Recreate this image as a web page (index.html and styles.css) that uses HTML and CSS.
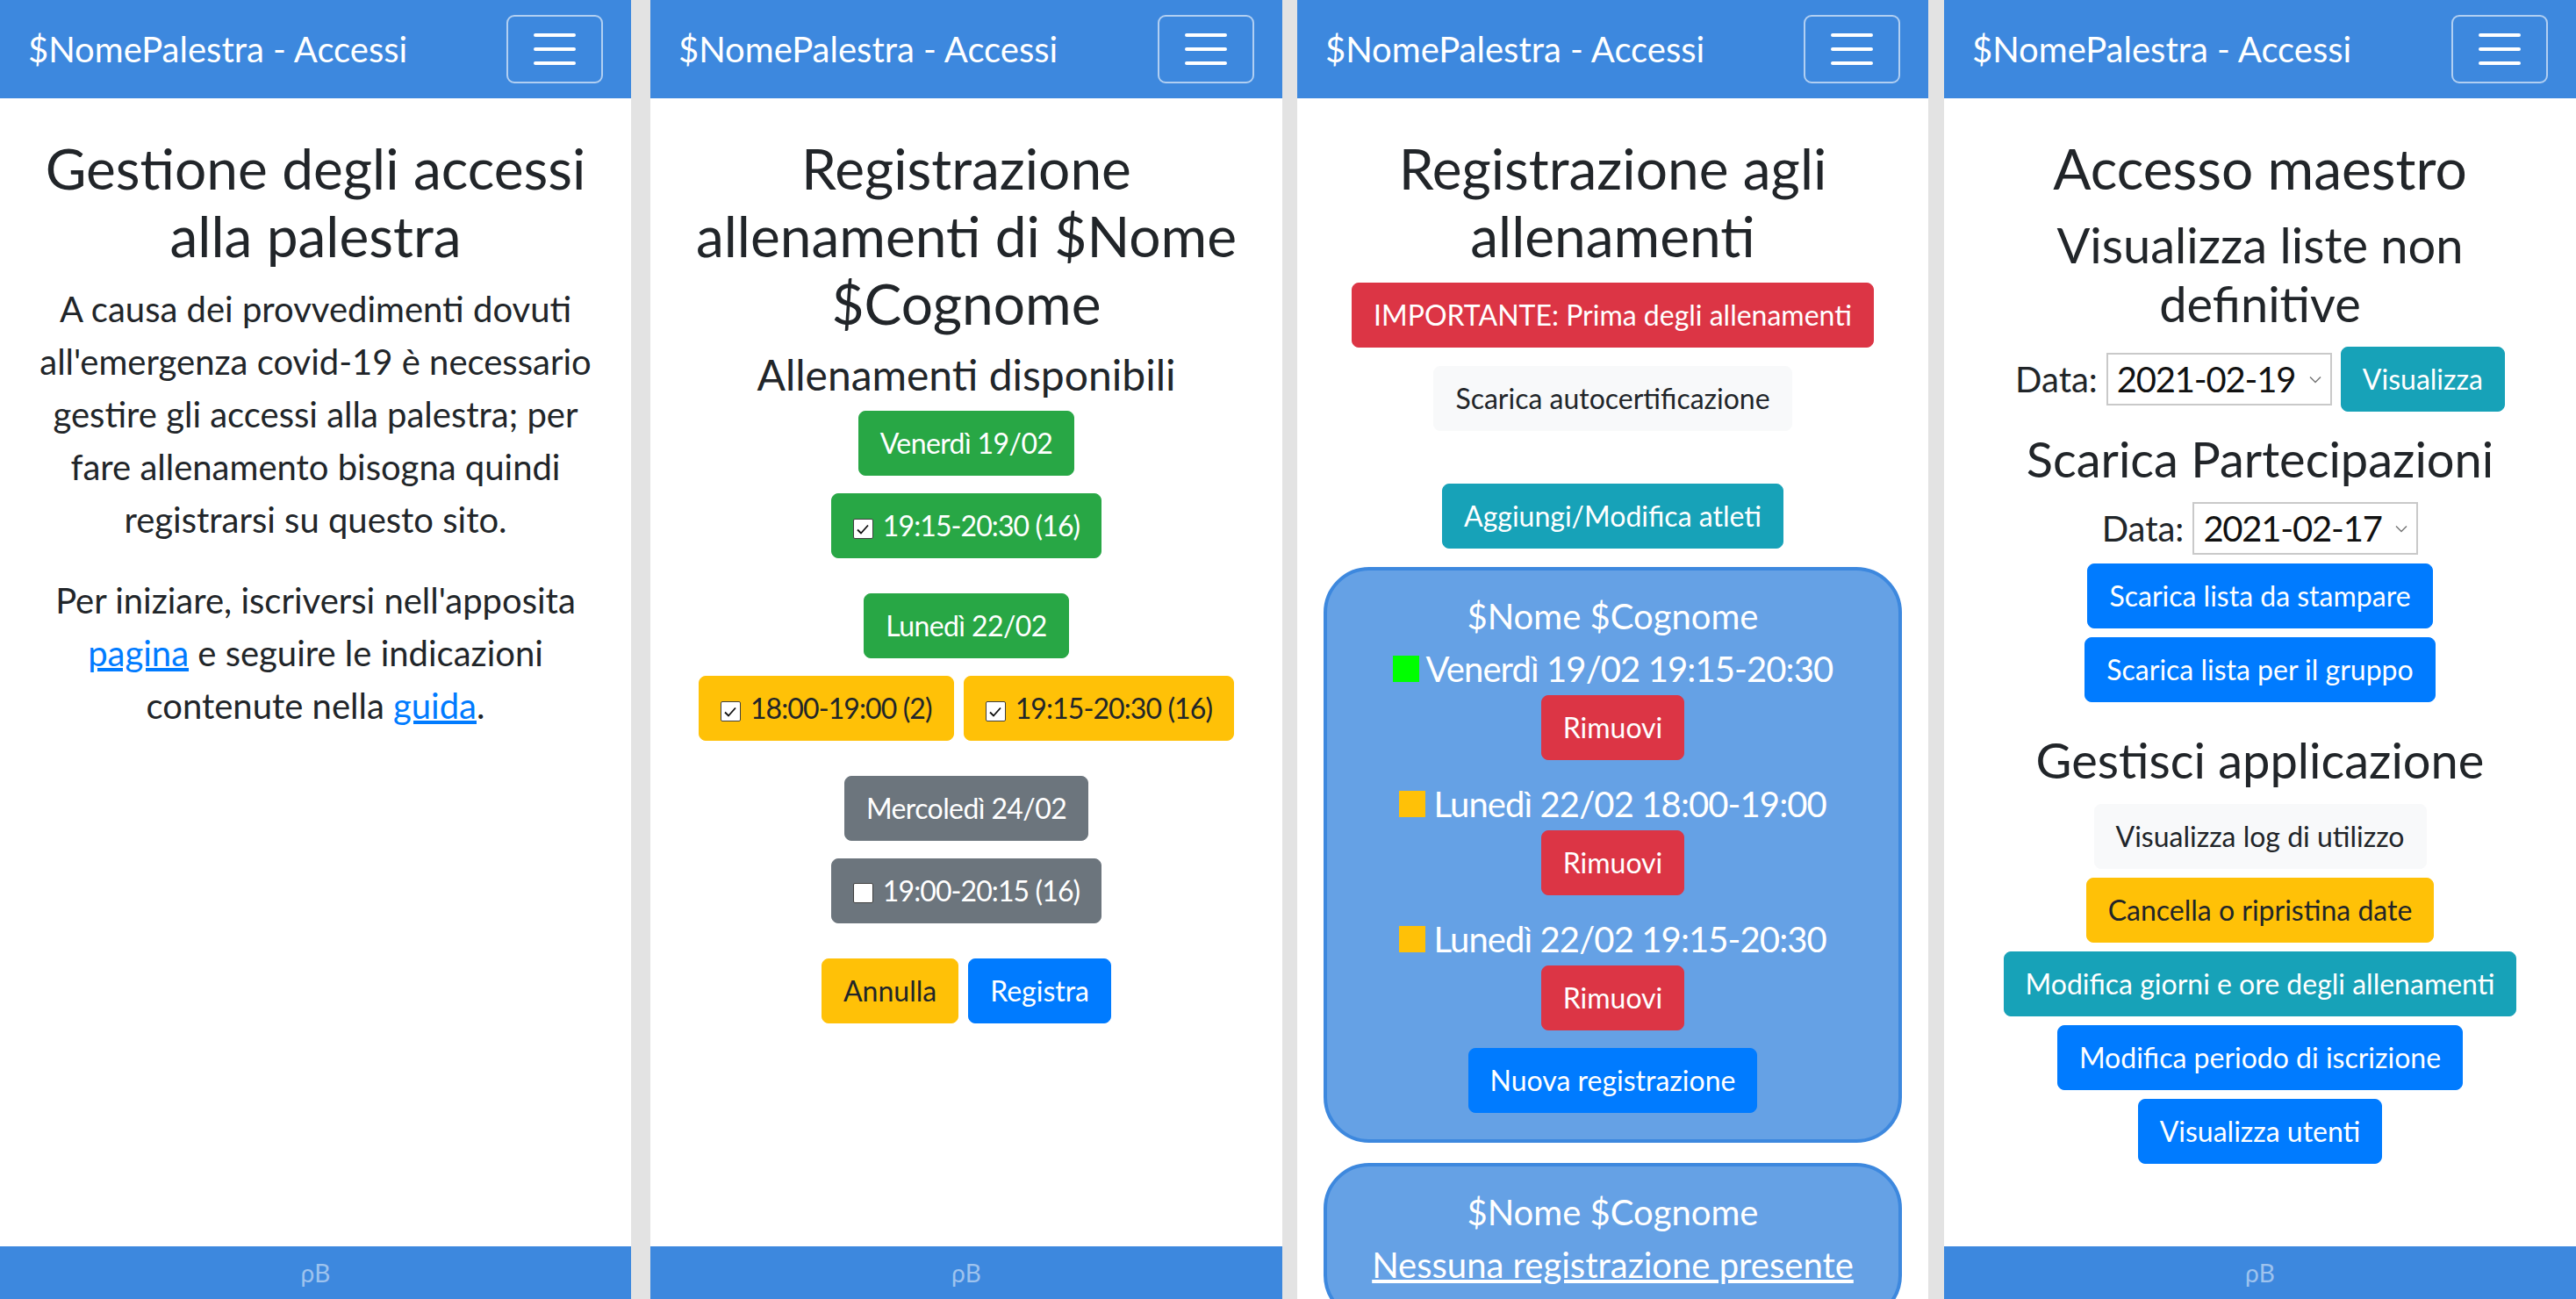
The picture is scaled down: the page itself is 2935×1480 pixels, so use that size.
FILE: index.html
```html
<!DOCTYPE html>
<html lang="it">
<head>
<meta charset="utf-8">
<title>$NomePalestra - Accessi</title>
<link rel="stylesheet" href="styles.css">
</head>
<body>
<div class="screens">

  <section class="screen screen--home">
    <header class="navbar">
      <span class="brand">$NomePalestra - Accessi</span>
      <button class="toggler" aria-label="Menu"><svg width="60" height="60" viewBox="0 0 60 60"><path d="M8 14h44M8 30h44M8 46h44" stroke="#fff" stroke-width="4" stroke-linecap="round" fill="none"/></svg></button>
    </header>
    <main class="content">
      <h1 class="title">Gestione degli accessi<br>alla palestra</h1>
      <p class="lead">A causa dei provvedimenti dovuti<br>all'emergenza covid-19 è necessario<br>gestire gli accessi alla palestra; per<br>fare allenamento bisogna quindi<br>registrarsi su questo sito.</p>
      <p class="lead">Per iniziare, iscriversi nell'apposita<br><a class="link" href="#">pagina</a> e seguire le indicazioni<br>contenute nella <a class="link" href="#">guida</a>.</p>
    </main>
    <footer class="footer">ρB</footer>
  </section>

  <section class="screen screen--register">
    <header class="navbar">
      <span class="brand">$NomePalestra - Accessi</span>
      <button class="toggler" aria-label="Menu"><svg width="60" height="60" viewBox="0 0 60 60"><path d="M8 14h44M8 30h44M8 46h44" stroke="#fff" stroke-width="4" stroke-linecap="round" fill="none"/></svg></button>
    </header>
    <main class="content">
      <h1 class="title">Registrazione<br>allenamenti di $Nome<br>$Cognome</h1>
      <h4 class="section-title">Allenamenti disponibili</h4>
      <div class="day">
        <span class="btn btn--success">Venerdì 19/02</span>
        <div class="slots">
          <label class="btn btn--success"><span class="check"><svg width="20" height="20" viewBox="0 0 20 20"><path d="M4 10.5l4 4 8-9" stroke="#111" stroke-width="1.8" fill="none"/></svg></span>19:15-20:30 (16)</label>
        </div>
      </div>
      <div class="day">
        <span class="btn btn--success">Lunedì 22/02</span>
        <div class="slots">
          <label class="btn btn--warning"><span class="check"><svg width="20" height="20" viewBox="0 0 20 20"><path d="M4 10.5l4 4 8-9" stroke="#111" stroke-width="1.8" fill="none"/></svg></span>18:00-19:00 (2)</label>
          <label class="btn btn--warning"><span class="check"><svg width="20" height="20" viewBox="0 0 20 20"><path d="M4 10.5l4 4 8-9" stroke="#111" stroke-width="1.8" fill="none"/></svg></span>19:15-20:30 (16)</label>
        </div>
      </div>
      <div class="day">
        <span class="btn btn--secondary">Mercoledì 24/02</span>
        <div class="slots">
          <label class="btn btn--secondary"><span class="check"></span>19:00-20:15 (16)</label>
        </div>
      </div>
      <div class="actions">
        <button class="btn btn--warning">Annulla</button>
        <button class="btn btn--primary">Registra</button>
      </div>
    </main>
    <footer class="footer">ρB</footer>
  </section>

  <section class="screen screen--list">
    <header class="navbar">
      <span class="brand">$NomePalestra - Accessi</span>
      <button class="toggler" aria-label="Menu"><svg width="60" height="60" viewBox="0 0 60 60"><path d="M8 14h44M8 30h44M8 46h44" stroke="#fff" stroke-width="4" stroke-linecap="round" fill="none"/></svg></button>
    </header>
    <main class="content">
      <h1 class="title">Registrazione agli<br>allenamenti</h1>
      <div class="stack">
        <a class="btn btn--danger" href="#">IMPORTANTE: Prima degli allenamenti</a>
        <a class="btn btn--light stack__gap-sm" href="#">Scarica autocertificazione</a>
        <a class="btn btn--info stack__gap-lg" href="#">Aggiungi/Modifica atleti</a>
      </div>
      <div class="athlete-card">
        <h5 class="athlete-card__name">$Nome $Cognome</h5>
        <div class="entry">
          <div class="entry__line"><span class="swatch swatch--green"></span> Venerdì 19/02 19:15-20:30</div>
          <button class="btn btn--danger">Rimuovi</button>
        </div>
        <div class="entry">
          <div class="entry__line"><span class="swatch swatch--yellow"></span> Lunedì 22/02 18:00-19:00</div>
          <button class="btn btn--danger">Rimuovi</button>
        </div>
        <div class="entry">
          <div class="entry__line"><span class="swatch swatch--yellow"></span> Lunedì 22/02 19:15-20:30</div>
          <button class="btn btn--danger">Rimuovi</button>
        </div>
        <a class="btn btn--primary" href="#">Nuova registrazione</a>
      </div>
      <div class="athlete-card athlete-card--next">
        <h5 class="athlete-card__name">$Nome $Cognome</h5>
        <a class="entry__link" href="#">Nessuna registrazione presente</a>
      </div>
    </main>
  </section>

  <section class="screen screen--coach">
    <header class="navbar">
      <span class="brand">$NomePalestra - Accessi</span>
      <button class="toggler" aria-label="Menu"><svg width="60" height="60" viewBox="0 0 60 60"><path d="M8 14h44M8 30h44M8 46h44" stroke="#fff" stroke-width="4" stroke-linecap="round" fill="none"/></svg></button>
    </header>
    <main class="content">
      <h1 class="title">Accesso maestro</h1>
      <h3 class="subtitle">Visualizza liste non<br>definitive</h3>
      <div class="date-row date-row--view">
        <span class="date-row__label">Data:</span>
        <span class="select"><span class="select__value">2021-02-19</span><svg class="select__arrow" width="14" height="9" viewBox="0 0 14 9"><path d="M1 1.5l6 6 6-6" stroke="#777" stroke-width="1.5" fill="none"/></svg></span>
        <button class="btn btn--info">Visualizza</button>
      </div>
      <h3 class="subtitle">Scarica Partecipazioni</h3>
      <div class="date-row date-row--download">
        <span class="date-row__label">Data:</span>
        <span class="select"><span class="select__value">2021-02-17</span><svg class="select__arrow" width="14" height="9" viewBox="0 0 14 9"><path d="M1 1.5l6 6 6-6" stroke="#777" stroke-width="1.5" fill="none"/></svg></span>
      </div>
      <div class="btn-stack">
        <a class="btn btn--primary" href="#">Scarica lista da stampare</a>
        <a class="btn btn--primary" href="#">Scarica lista per il gruppo</a>
      </div>
      <h3 class="subtitle subtitle--spaced">Gestisci applicazione</h3>
      <div class="btn-stack">
        <a class="btn btn--light" href="#">Visualizza log di utilizzo</a>
        <a class="btn btn--warning" href="#">Cancella o ripristina date</a>
        <a class="btn btn--info" href="#">Modifica giorni e ore degli allenamenti</a>
        <a class="btn btn--primary" href="#">Modifica periodo di iscrizione</a>
        <a class="btn btn--primary" href="#">Visualizza utenti</a>
      </div>
    </main>
    <footer class="footer">ρB</footer>
  </section>

</div>
</body>
</html>
```

FILE: styles.css
```css
html, body {
  margin: 0;
  padding: 0;
}

body {
  background: #e3e3e3;
  font-family: Lato, "Open Sans", "Noto Sans", sans-serif;
  color: #212529;
}

.screens {
  display: flex;
  height: 1480px;
  overflow: hidden;
}

.screen {
  flex: none;
  width: 720px;
  height: 1480px;
  background: #fff;
  display: flex;
  flex-direction: column;
  overflow: hidden;
}

.screen--home { width: 719px; }
.screen--register { margin-left: 22px; }
.screen--list { width: 719px; margin-left: 17px; }
.screen--coach { margin-left: 18px; }

/* navbar */
.navbar {
  flex: none;
  height: 112px;
  box-sizing: border-box;
  padding: 0 32px;
  background: #3d88de;
  display: flex;
  align-items: center;
  justify-content: space-between;
}

.brand {
  color: #fff;
  font-size: 40px;
  line-height: 48px;
}

.toggler {
  width: 110px;
  height: 78px;
  box-sizing: border-box;
  padding: 0;
  border: 2px solid rgba(255, 255, 255, 0.6);
  border-radius: 9px;
  background: transparent;
  display: flex;
  align-items: center;
  justify-content: center;
}

/* content */
.content {
  flex: 1;
  min-height: 0;
  padding: 42px 30px 0;
  text-align: center;
  overflow: hidden;
}

.title {
  font-size: 64px;
  line-height: 1.2;
  font-weight: 400;
  margin: 0 0 14px;
}

.subtitle {
  font-size: 56px;
  line-height: 1.2;
  font-weight: 400;
  margin: 0 0 16px;
}

.subtitle--spaced { margin-top: 32px; }

.section-title {
  font-size: 48px;
  line-height: 1.2;
  font-weight: 400;
  margin: 0 0 12px;
}

.lead {
  font-size: 40px;
  line-height: 60px;
  font-weight: 400;
  margin: 0 0 32px;
}

.link {
  color: #007bff;
  text-decoration: underline;
}

/* footer */
.footer {
  flex: none;
  height: 60px;
  line-height: 60px;
  background: #3d88de;
  color: rgba(255, 255, 255, 0.5);
  text-align: center;
  font-size: 28px;
}

/* buttons */
.btn {
  display: inline-block;
  box-sizing: border-box;
  font-family: inherit;
  font-size: 32px;
  line-height: 48px;
  font-weight: 400;
  padding: 12px 24px;
  border: 1px solid transparent;
  border-radius: 8px;
  color: #fff;
  text-decoration: none;
  white-space: nowrap;
  cursor: pointer;
}

.btn--success { background: #28a745; border-color: #28a745; }
.btn--warning { background: #ffc107; border-color: #ffc107; color: #212529; }
.btn--secondary { background: #6c757d; border-color: #6c757d; }
.btn--primary { background: #007bff; border-color: #007bff; }
.btn--danger { background: #dc3545; border-color: #dc3545; }
.btn--info { background: #17a2b8; border-color: #17a2b8; }
.btn--light { background: #f8f9fa; border-color: #f8f9fa; color: #212529; }

.check {
  display: inline-flex;
  align-items: center;
  justify-content: center;
  width: 23px;
  height: 23px;
  box-sizing: border-box;
  margin-right: 11px;
  vertical-align: -2px;
  background: #fff;
  border: 1.5px solid #3f3f3f;
  border-radius: 2px;
}

/* registration screen */
.day {
  display: flex;
  flex-direction: column;
  align-items: center;
  gap: 20px;
  margin-bottom: 40px;
}

.day .btn { letter-spacing: -0.6px; }
.slots .btn { letter-spacing: -0.9px; }

.slots,
.actions {
  display: flex;
  justify-content: center;
  gap: 11px;
}

/* list screen */
.stack {
  display: flex;
  flex-direction: column;
  align-items: center;
}

.stack__gap-sm { margin-top: 21px; }
.stack__gap-lg { margin-top: 60px; }

.athlete-card {
  margin-top: 21px;
  box-sizing: border-box;
  border: 4px solid #3d88de;
  border-radius: 52px;
  background: #65a1e5;
  color: #fff;
  padding: 28px 16px 30px;
}

.athlete-card--next { margin-top: 23px; }

.athlete-card__name {
  font-size: 40px;
  line-height: 48px;
  font-weight: 400;
  margin: 0 0 6px;
}

.entry { margin-bottom: 20px; }

.entry__line {
  font-size: 40px;
  line-height: 60px;
  letter-spacing: -0.9px;
}

.entry__link {
  display: block;
  font-size: 40px;
  line-height: 60px;
  color: #fff;
  text-decoration: underline;
}

.swatch {
  display: inline-block;
  width: 30px;
  height: 30px;
}

.swatch--green { background: #00ff00; }
.swatch--yellow { background: #ffc107; }

/* coach screen */
.date-row {
  display: flex;
  justify-content: center;
  align-items: center;
  gap: 10px;
}

.date-row--view { margin-bottom: 20px; }
.date-row--download { margin-bottom: 10px; }

.date-row__label {
  font-size: 40px;
  line-height: 60px;
}

.select {
  width: 257px;
  height: 60px;
  box-sizing: border-box;
  padding: 0 10px;
  border: 2px solid #c9c9c9;
  background: #fff;
  color: #111;
  font-size: 40px;
  display: flex;
  align-items: center;
  justify-content: space-between;
  text-align: left;
}

.select__value { letter-spacing: -1.2px; }

.select__arrow { flex: none; }

.btn-stack {
  display: flex;
  flex-direction: column;
  align-items: center;
  gap: 10px;
}
```
